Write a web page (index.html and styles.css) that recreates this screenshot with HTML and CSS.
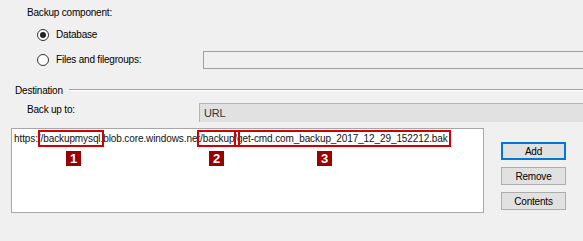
FILE: index.html
```html
<!DOCTYPE html>
<html lang="en">
<head>
  <meta charset="UTF-8">
  <title>Back Up Database</title>
  <link rel="stylesheet" href="styles.css">
</head>
<body>
  <div class="dialog">
    <div class="label-row component">Backup component:</div>

    <div class="radio-row">
      <span class="radio checked"></span>
      <span>Database</span>
    </div>

    <div class="radio-row files">
      <span class="radio"></span>
      <span class="files-label">Files and filegroups:</span>
      <span class="textbox"></span>
    </div>

    <div class="group-title">
      <span>Destination</span>
      <span class="rule"></span>
    </div>

    <div class="backup-row">
      <span class="backup-label">Back up to:</span>
      <span class="combo">URL</span>
    </div>

    <div class="dest">
      <div class="listbox">
        <div class="url">https:/<span class="mark m1">/backupmysql</span>.blob.core.windows.net<span class="mark m2">/backup/</span><span class="mark m3">get-cmd.com_backup_2017_12_29_152212.bak</span></div>
        <span class="tag t1">1</span>
        <span class="tag t2">2</span>
        <span class="tag t3">3</span>
      </div>
      <div class="buttons">
        <button class="btn default">Add</button>
        <button class="btn">Remove</button>
        <button class="btn">Contents</button>
      </div>
    </div>
  </div>
</body>
</html>
```

FILE: styles.css
```css
body {
  margin: 0;
  background: #f0f0f0;
  font-family: 'Liberation Sans', Arial, sans-serif;
  font-size: 10px;
  letter-spacing: -0.2px;
  color: #000;
  overflow: hidden;
}

.dialog {
  width: 583px;
  height: 241px;
}

.component {
  padding: 7px 0 0 27px;
  height: 14px;
}

.radio-row {
  display: flex;
  align-items: center;
  padding-left: 37px;
  height: 25px;
  margin-top: 1px;
}

.radio-row.files {
  margin-top: 0;
}

.radio {
  width: 10px;
  height: 10px;
  border: 1px solid #333;
  border-radius: 50%;
  background: #fff;
  margin-right: 7px;
  position: relative;
  flex: none;
}

.radio.checked::after {
  content: "";
  position: absolute;
  left: 2px;
  top: 2px;
  width: 6px;
  height: 6px;
  border-radius: 50%;
  background: #222;
}

.files-label {
  width: 147px;
}

.textbox {
  flex: 1;
  height: 16px;
  border: 1px solid #a0a0a0;
  background: #f0f0f0;
  margin-right: -10px;
}

.group-title {
  display: flex;
  align-items: center;
  padding-left: 15px;
  margin-top: 11px;
  height: 14px;
}

.rule {
  flex: 1;
  height: 0;
  border-top: 1px solid #a0a0a0;
  border-bottom: 1px solid #fff;
  margin-left: 6px;
}

.backup-row {
  display: flex;
  align-items: flex-start;
  padding-left: 27px;
  margin-top: 1px;
  height: 26px;
}

.backup-label {
  width: 172px;
  padding-top: 6px;
}

.combo {
  flex: 1;
  margin-top: 5px;
  height: 18px;
  line-height: 18px;
  padding-left: 4px;
  border-top: 1px solid #b5b5b5;
  border-left: 1px solid #b5b5b5;
  background: #e1e1e1;
  color: #333;
  font-size: 11px;
}

.dest {
  display: flex;
  padding-left: 11px;
  margin-top: 4px;
}

.listbox {
  position: relative;
  width: 471px;
  height: 83px;
  background: #fff;
  border: 1px solid #a8a8a8;
}

.url {
  padding: 4px 0 0 2px;
  white-space: nowrap;
  letter-spacing: -0.1px;
  color: #111;
}

.mark {
  outline: 2px solid #d20000;
  outline-offset: 1px;
}

.tag {
  position: absolute;
  top: 22px;
  width: 15px;
  height: 15px;
  line-height: 15px;
  text-align: center;
  background: #9b0000;
  color: #fff;
  font-weight: bold;
  font-size: 13px;
  letter-spacing: 0;
}

.t1 { left: 54px; }
.t2 { left: 197px; }
.t3 { left: 305px; }

.buttons {
  display: flex;
  flex-direction: column;
  gap: 7px;
  margin: 14px 0 0 17px;
}

.btn {
  width: 65px;
  height: 18px;
  padding: 0;
  background: #e1e1e1;
  border: 1px solid #adadad;
  font-family: 'Liberation Sans', Arial, sans-serif;
  font-size: 10px;
  letter-spacing: -0.2px;
  color: #000;
}

.btn.default {
  border: 1px solid #0078d7;
  box-shadow: inset 0 0 0 1px #0078d7;
}
```
